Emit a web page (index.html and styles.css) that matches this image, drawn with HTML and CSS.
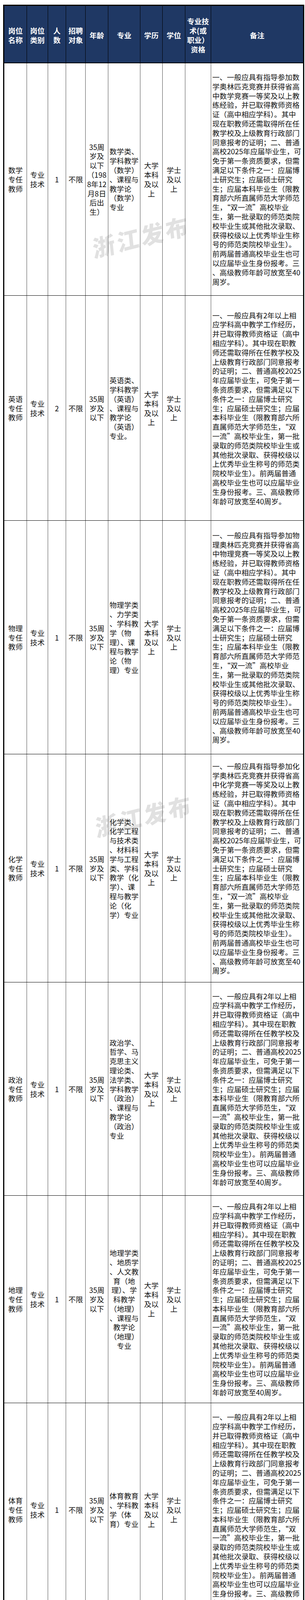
FILE: index.html
```html
<!DOCTYPE html>
<html lang="zh-CN">
<head>
<meta charset="utf-8">
<title>岗位表</title>
<link rel="stylesheet" href="styles.css">
</head>
<body>
<div class="page">
<table class="jobs">
<colgroup>
<col class="c1"><col class="c2"><col class="c3"><col class="c4"><col class="c5"><col class="c6"><col class="c7"><col class="c8"><col class="c9"><col class="c10">
</colgroup>
<thead>
<tr class="h-head">
<th>岗位<br>名称</th>
<th>岗位<br>类别</th>
<th>人<br>数</th>
<th>招聘<br>对象</th>
<th>年龄</th>
<th>专业</th>
<th>学历</th>
<th>学位</th>
<th>专业技<br>术(或<br>职业）<br>资格</th>
<th>备注</th>
</tr>
</thead>
<tbody>
<tr class="h-r1">
<td>数学<br>专任<br>教师</td>
<td>专业<br>技术</td>
<td>1</td>
<td>不限</td>
<td>35周<br>岁及<br>以下<br>（198<br>8年12<br>月8日<br>后出<br>生）</td>
<td class="major">数学类、<br>学科教学<br>（数学）<br>、课程与<br>教学论<br>（数学）<br>专业</td>
<td>大学<br>本科<br>及以<br>上</td>
<td>学士<br>及以<br>上</td>
<td></td>
<td class="note">一、一般应具有指导参加数<br>学奥林匹克竞赛并获得省高<br>中数学竞赛一等奖及以上教<br>练经验，并已取得教师资格<br>证（高中相应学科）。其中<br>现在职教师还需取得所在任<br>教学校及上级教育行政部门<br>同意报考的证明；二、普通<br>高校2025年应届毕业生，可<br>免于第一条资质要求，但需<br>满足以下条件之一：应届博<br>士研究生；应届硕士研究<br>生；应届本科毕业生（限教<br>育部六所直属师范大学师范<br>生，“双一流”高校毕业<br>生，第一批录取的师范类院<br>校毕业生或其他批次录取、<br>获得校级以上优秀毕业生称<br>号的师范类院校毕业生）。<br>前两届普通高校毕业生也可<br>以应届毕业生身份报考。三<br>、高级教师年龄可放宽至40<br>周岁。</td>
</tr>
<tr class="h-r2">
<td>英语<br>专任<br>教师</td>
<td>专业<br>技术</td>
<td>2</td>
<td>不限</td>
<td>35周<br>岁及<br>以下</td>
<td class="major">英语类、<br>学科教学<br>（英语）<br>、课程与<br>教学论<br>（英语）<br>专业。</td>
<td>大学<br>本科<br>及以<br>上</td>
<td>学士<br>及以<br>上</td>
<td></td>
<td class="note">一、一般应具有2年以上相<br>应学科高中教学工作经历，<br>并已取得教师资格证（高中<br>相应学科）。其中现在职教<br>师还需取得所在任教学校及<br>上级教育行政部门同意报考<br>的证明；二、普通高校2025<br>年应届毕业生，可免于第一<br>条资质要求，但需满足以下<br>条件之一：应届博士研究<br>生；应届硕士研究生；应届<br>本科毕业生（限教育部六所<br>直属师范大学师范生，“双<br>一流”高校毕业生，第一批<br>录取的师范类院校毕业生或<br>其他批次录取、获得校级以<br>上优秀毕业生称号的师范类<br>院校毕业生）。前两届普通<br>高校毕业生也可以应届毕业<br>生身份报考。三、高级教师<br>年龄可放宽至40周岁。</td>
</tr>
<tr class="h-r3">
<td>物理<br>专任<br>教师</td>
<td>专业<br>技术</td>
<td>1</td>
<td>不限</td>
<td>35周<br>岁及<br>以下</td>
<td class="major">物理学类<br>、力学类<br>、学科教<br>学（物<br>理）、课<br>程与教学<br>论（物<br>理）专业</td>
<td>大学<br>本科<br>及以<br>上</td>
<td>学士<br>及以<br>上</td>
<td></td>
<td class="note">一、一般应具有指导参加物<br>理奥林匹克竞赛并获得省高<br>中物理竞赛一等奖及以上教<br>练经验，并已取得教师资格<br>证（高中相应学科）。其中<br>现在职教师还需取得所在任<br>教学校及上级教育行政部门<br>同意报考的证明；二、普通<br>高校2025年应届毕业生，可<br>免于第一条资质要求，但需<br>满足以下条件之一：应届博<br>士研究生；应届硕士研究<br>生；应届本科毕业生（限教<br>育部六所直属师范大学师范<br>生，“双一流”高校毕业<br>生，第一批录取的师范类院<br>校毕业生或其他批次录取、<br>获得校级以上优秀毕业生称<br>号的师范类院校毕业生）。<br>前两届普通高校毕业生也可<br>以应届毕业生身份报考。三<br>、高级教师年龄可放宽至40<br>周岁。</td>
</tr>
<tr class="h-r4">
<td>化学<br>专任<br>教师</td>
<td>专业<br>技术</td>
<td>1</td>
<td>不限</td>
<td>35周<br>岁及<br>以下</td>
<td class="major">化学类、<br>化学工程<br>与技术类<br>、材料科<br>学与工程<br>类、学科<br>教学（化<br>学）、课<br>程与教学<br>论（化<br>学）专业</td>
<td>大学<br>本科<br>及以<br>上</td>
<td>学士<br>及以<br>上</td>
<td></td>
<td class="note">一、一般应具有指导参加化<br>学奥林匹克竞赛并获得省高<br>中化学竞赛一等奖及以上教<br>练经验，并已取得教师资格<br>证（高中相应学科）。其中<br>现在职教师还需取得所在任<br>教学校及上级教育行政部门<br>同意报考的证明；二、普通<br>高校2025年应届毕业生，可<br>免于第一条资质要求，但需<br>满足以下条件之一：应届博<br>士研究生；应届硕士研究<br>生；应届本科毕业生（限教<br>育部六所直属师范大学师范<br>生，“双一流”高校毕业<br>生，第一批录取的师范类院<br>校毕业生或其他批次录取、<br>获得校级以上优秀毕业生称<br>号的师范类院校毕业生）。<br>前两届普通高校毕业生也可<br>以应届毕业生身份报考。三<br>、高级教师年龄可放宽至40<br>周岁。</td>
</tr>
<tr class="h-r5">
<td>政治<br>专任<br>教师</td>
<td>专业<br>技术</td>
<td>1</td>
<td>不限</td>
<td>35周<br>岁及<br>以下</td>
<td class="major">政治学、<br>哲学、马<br>克思主义<br>理论类、<br>法学类、<br>学科教学<br>（政治）<br>、课程与<br>教学论<br>（政治）<br>专业</td>
<td>大学<br>本科<br>及以<br>上</td>
<td>学士<br>及以<br>上</td>
<td></td>
<td class="note">一、一般应具有2年以上相<br>应学科高中教学工作经历，<br>并已取得教师资格证（高中<br>相应学科）。其中现在职教<br>师还需取得所在任教学校及<br>上级教育行政部门同意报考<br>的证明；二、普通高校2025<br>年应届毕业生，可免于第一<br>条资质要求，但需满足以下<br>条件之一：应届博士研究<br>生；应届硕士研究生；应届<br>本科毕业生（限教育部六所<br>直属师范大学师范生，“双<br>一流”高校毕业生，第一批<br>录取的师范类院校毕业生或<br>其他批次录取、获得校级以<br>上优秀毕业生称号的师范类<br>院校毕业生）。前两届普通<br>高校毕业生也可以应届毕业<br>生身份报考。三、高级教师<br>年龄可放宽至40周岁。</td>
</tr>
<tr class="h-r6">
<td>地理<br>专任<br>教师</td>
<td>专业<br>技术</td>
<td>1</td>
<td>不限</td>
<td>35周<br>岁及<br>以下</td>
<td class="major major-center">地理学类<br>、地质学<br>、人文教<br>育（地<br>理）、学<br>科教学<br>（地理）<br>、课程与<br>教学论<br>（地理）<br>专业</td>
<td>大学<br>本科<br>及以<br>上</td>
<td>学士<br>及以<br>上</td>
<td></td>
<td class="note">一、一般应具有2年以上相<br>应学科高中教学工作经历，<br>并已取得教师资格证（高中<br>相应学科）。其中现在职教<br>师还需取得所在任教学校及<br>上级教育行政部门同意报考<br>的证明；二、普通高校2025<br>年应届毕业生，可免于第一<br>条资质要求，但需满足以下<br>条件之一：应届博士研究<br>生；应届硕士研究生；应届<br>本科毕业生（限教育部六所<br>直属师范大学师范生，“双<br>一流”高校毕业生，第一批<br>录取的师范类院校毕业生或<br>其他批次录取、获得校级以<br>上优秀毕业生称号的师范类<br>院校毕业生）。前两届普通<br>高校毕业生也可以应届毕业<br>生身份报考。三、高级教师<br>年龄可放宽至40周岁。</td>
</tr>
<tr class="h-r7">
<td>体育<br>专任<br>教师</td>
<td>专业<br>技术</td>
<td>1</td>
<td>不限</td>
<td>35周<br>岁及<br>以下</td>
<td class="major">体育教育<br>、学科教<br>学（体<br>育）专业</td>
<td>大学<br>本科<br>及以<br>上</td>
<td>学士<br>及以<br>上</td>
<td></td>
<td class="note">一、一般应具有2年以上相<br>应学科高中教学工作经历，<br>并已取得教师资格证（高中<br>相应学科）。其中现在职教<br>师还需取得所在任教学校及<br>上级教育行政部门同意报考<br>的证明；二、普通高校2025<br>年应届毕业生，可免于第一<br>条资质要求，但需满足以下<br>条件之一：应届博士研究<br>生；应届硕士研究生；应届<br>本科毕业生（限教育部六所<br>直属师范大学师范生，“双<br>一流”高校毕业生，第一批<br>录取的师范类院校毕业生或<br>其他批次录取、获得校级以<br>上优秀毕业生称号的师范类<br>院校毕业生）。前两届普通<br>高校毕业生也可以应届毕业<br>生身份报考。三、高级教师<br>年龄可放宽至40周岁。</td>
</tr>
</tbody>
</table>
<div class="wm wm1">浙江发布</div>
<div class="wm wm2">浙江发布</div>
</div>
</body>
</html>
```

FILE: styles.css
```css
html, body {
  margin: 0;
  padding: 0;
  background: #ffffff;
}

body {
  font-family: "Noto Sans CJK SC", "Noto Sans", sans-serif;
}

.page {
  position: relative;
  width: 780px;
  box-sizing: border-box;
  padding: 12px 0 4px 8px;
}

.jobs {
  border-collapse: collapse;
  table-layout: fixed;
  width: 767px;
  font-size: 18.6px;
  line-height: 23.8px;
  color: #111111;
  border: 3px solid #000000;
}

.c1 { width: 59px; }
.c2 { width: 54px; }
.c3 { width: 46px; }
.c4 { width: 50px; }
.c5 { width: 58px; }
.c6 { width: 82px; }
.c7 { width: 57px; }
.c8 { width: 58px; }
.c9 { width: 66px; }
.c10 { width: 237px; }

.jobs th,
.jobs td {
  padding: 0 1px;
  text-align: center;
  vertical-align: middle;
  white-space: nowrap;
  border-left: 1px solid #4a4a4a;
  border-right: 1px solid #4a4a4a;
  border-top: 1px solid #000000;
  border-bottom: 1px solid #000000;
}

.jobs th {
  background: #1f3864;
  color: #ffffff;
  font-weight: 700;
  padding-top: 5px;
  border-left: 1px solid #000000;
  border-right: 1px solid #000000;
  border-bottom: 2px solid #000000;
}

.jobs td.major {
  text-align: left;
  padding-left: 3px;
}

.jobs td.major-center {
  text-align: center;
  padding-left: 1px;
}

.jobs td.note {
  text-align: left;
  padding-left: 3px;
}

.h-head { height: 147px; }
.h-r1 { height: 596px; }
.h-r2 { height: 576px; }
.h-r3 { height: 598px; }
.h-r4 { height: 584px; }
.h-r5 { height: 546px; }
.h-r6 { height: 531px; }
.h-r7 { height: 548px; }

.wm {
  position: absolute;
  width: 270px;
  height: 64px;
  line-height: 64px;
  text-align: center;
  font-family: "Noto Sans CJK SC", sans-serif;
  font-size: 58px;
  font-weight: 900;
  letter-spacing: 6px;
  color: rgba(120, 120, 120, 0.22);
  transform: rotate(-14deg) skewX(-8deg);
  white-space: nowrap;
  pointer-events: none;
}

.wm1 {
  left: 226px;
  top: 572px;
}

.wm2 {
  left: 233px;
  top: 2055px;
}
```
